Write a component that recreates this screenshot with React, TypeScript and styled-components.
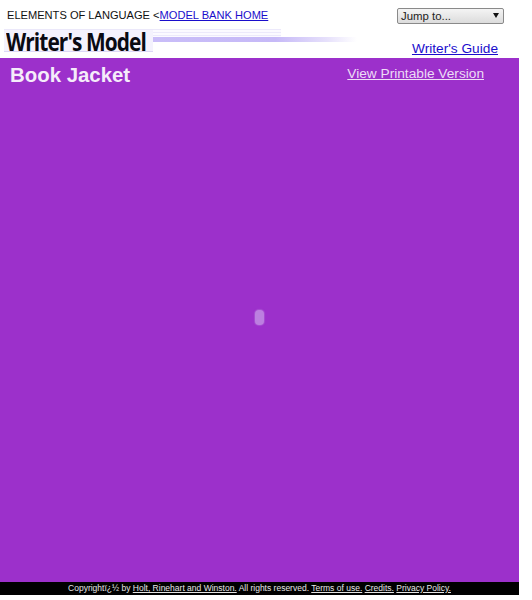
import React from "react";
import styled, { createGlobalStyle } from "styled-components";

const Global = createGlobalStyle`
  html, body { margin: 0; padding: 0; background: #fff; }
  body { font-family: "Liberation Sans", Arial, sans-serif; }
`;

const Page = styled.div`
  width: 519px;
  height: 595px;
  display: flex;
  flex-direction: column;
`;

const Header = styled.header`
  height: 58px;
  flex: none;
  display: flex;
  justify-content: space-between;
`;

const Brand = styled.div`
  display: flex;
  flex-direction: column;
  padding: 8px 0 0 7px;
`;

const Crumb = styled.div`
  font-size: 11.1px;
  line-height: 15px;
  color: #111;
  white-space: nowrap;
`;

const BlueLink = styled.a`
  color: #1a0dcc;
  text-decoration: underline;
`;

const Banner = styled.div`
  display: flex;
  align-items: flex-start;
  margin: 6px 0 0 -3px;
  height: 23px;
`;

const LogoBox = styled.div`
  width: 149px;
  height: 23px;
  flex: none;
  background: #f4f2fd;
  border-top: 1px solid #ebe8fa;
  border-bottom: 1px solid #dcd7f5;
  box-sizing: border-box;
  display: flex;
  align-items: center;
  padding-left: 2px;
`;

const LogoText = styled.span`
  font-family: "Open Sans", sans-serif;
  font-weight: 700;
  font-size: 25px;
  line-height: 22px;
  color: #0a0a12;
  letter-spacing: -1.1px;
  white-space: nowrap;
  display: inline-block;
  transform: scaleX(0.835);
  transform-origin: left center;
`;

const SwooshStack = styled.div`
  display: flex;
  flex-direction: column;
`;

const FaintRules = styled.div`
  width: 128px;
  height: 8px;
  background: repeating-linear-gradient(to bottom, #ece9fb 0 1px, #fbfaff 1px 3px);
`;

const Swoosh = styled.div`
  width: 204px;
  height: 5px;
  background: linear-gradient(to right, #c9bdf8 0%, #c6b9f7 60%, #e6e0fb 85%, #ffffff 100%);
`;

const Tools = styled.div`
  display: flex;
  flex-direction: column;
  align-items: flex-end;
  padding: 8px 15px 0 0;
`;

const Jump = styled.div`
  width: 107px;
  height: 16px;
  box-sizing: border-box;
  border: 1px solid #8a8a8a;
  border-radius: 2px;
  background: linear-gradient(#f4f4f4, #dcdcdc);
  font-size: 11.4px;
  line-height: 15px;
  color: #222;
  padding: 0 4px 0 3px;
  display: flex;
  justify-content: space-between;
  align-items: center;
`;

const Arrow = styled.svg`
  width: 6px;
  height: 5px;
  fill: #111;
  margin-top: -2px;
`;

const GuideLink = styled(BlueLink)`
  font-size: 13.7px;
  line-height: 16px;
  margin: 17px 6px 0 0;
`;

const Main = styled.main`
  flex: 1;
  background: #9c30cb;
  position: relative;
`;

const TitleRow = styled.div`
  display: flex;
  justify-content: space-between;
  align-items: center;
  padding: 5px 35px 0 10px;
`;

const Title = styled.h1`
  margin: 0;
  font-size: 20.4px;
  line-height: 24px;
  font-weight: 700;
  color: #f5ecfa;
`;

const PrintLink = styled.a`
  font-size: 13.7px;
  line-height: 22px;
  margin-bottom: 2px;
  color: #eddcf6;
  text-decoration: underline;
`;

const Marker = styled.div`
  position: absolute;
  left: 255px;
  top: 252px;
  width: 9px;
  height: 15px;
  border-radius: 4px;
  background: #bc7fe0;
  box-shadow: 0 0 1px 1px rgba(180, 110, 220, 0.5);
`;

const Footer = styled.footer`
  height: 13px;
  flex: none;
  background: #000;
  color: #e6e6e6;
  font-size: 8.5px;
  line-height: 13px;
  text-align: center;
  white-space: nowrap;
`;

const FooterLink = styled.a`
  color: #e6e6e6;
  text-decoration: underline;
`;

export default function App() {
  return (
    <Page>
      <Global />
      <Header>
        <Brand>
          <Crumb>
            ELEMENTS OF LANGUAGE &lt;<BlueLink href="#">MODEL BANK HOME</BlueLink>
          </Crumb>
          <Banner>
            <LogoBox>
              <LogoText>Writer's Model</LogoText>
            </LogoBox>
            <SwooshStack>
              <FaintRules />
              <Swoosh />
            </SwooshStack>
          </Banner>
        </Brand>
        <Tools>
          <Jump>
            Jump to...
            <Arrow viewBox="0 0 6 5"><path d="M0 0h6L3 5z" /></Arrow>
          </Jump>
          <GuideLink href="#">Writer's Guide</GuideLink>
        </Tools>
      </Header>
      <Main>
        <TitleRow>
          <Title>Book Jacket</Title>
          <PrintLink href="#">View Printable Version</PrintLink>
        </TitleRow>
        <Marker />
      </Main>
      <Footer>
        Copyrightï¿½ by <FooterLink href="#">Holt, Rinehart and Winston.</FooterLink> All rights reserved.{" "}
        <FooterLink href="#">Terms of use.</FooterLink> <FooterLink href="#">Credits.</FooterLink>{" "}
        <FooterLink href="#">Privacy Policy.</FooterLink>
      </Footer>
    </Page>
  );
}
